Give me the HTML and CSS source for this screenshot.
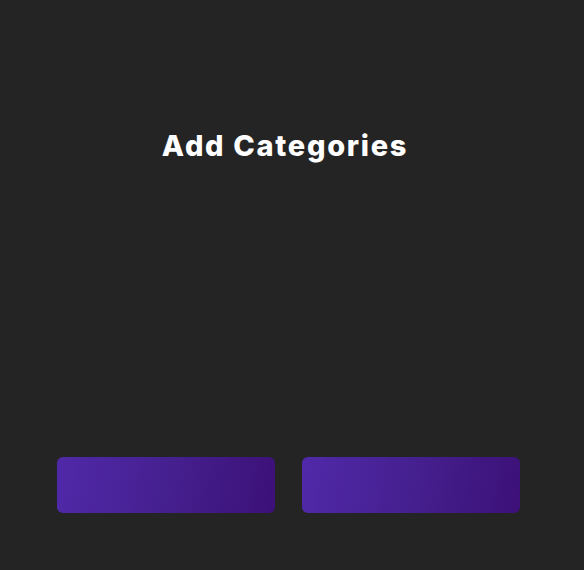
FILE: index.html
```html
<!DOCTYPE html>
<html>
<head>
<meta charset="utf-8">
<link rel="stylesheet" href="styles.css">
</head>
<body>
<main class="modal">
  <h1 class="title">Add Categories</h1>
  <div class="spacer"></div>
  <div class="actions">
    <button class="btn"></button>
    <button class="btn"></button>
  </div>
</main>
</body>
</html>
```
FILE: styles.css
```css
html, body {
  margin: 0;
  padding: 0;
  background: #242424;
  height: 100%;
}
.modal {
  width: 584px;
  height: 570px;
  display: flex;
  flex-direction: column;
  box-sizing: border-box;
  padding: 128px 0 0 0;
}
.title {
  margin: 0;
  font-family: "Inter", sans-serif;
  font-weight: 800;
  font-size: 29px;
  line-height: 36px;
  color: #ffffff;
  text-align: center;
  padding-right: 14px;
  letter-spacing: 1.7px;
}
.spacer {
  height: 293px;
}
.actions {
  display: flex;
  gap: 27px;
  padding-left: 57px;
}
.btn {
  width: 218px;
  height: 56px;
  border: none;
  border-radius: 6px;
  background: linear-gradient(100deg, #5029a9 0%, #45208f 50%, #3c1077 100%);
  padding: 0;
}
```
